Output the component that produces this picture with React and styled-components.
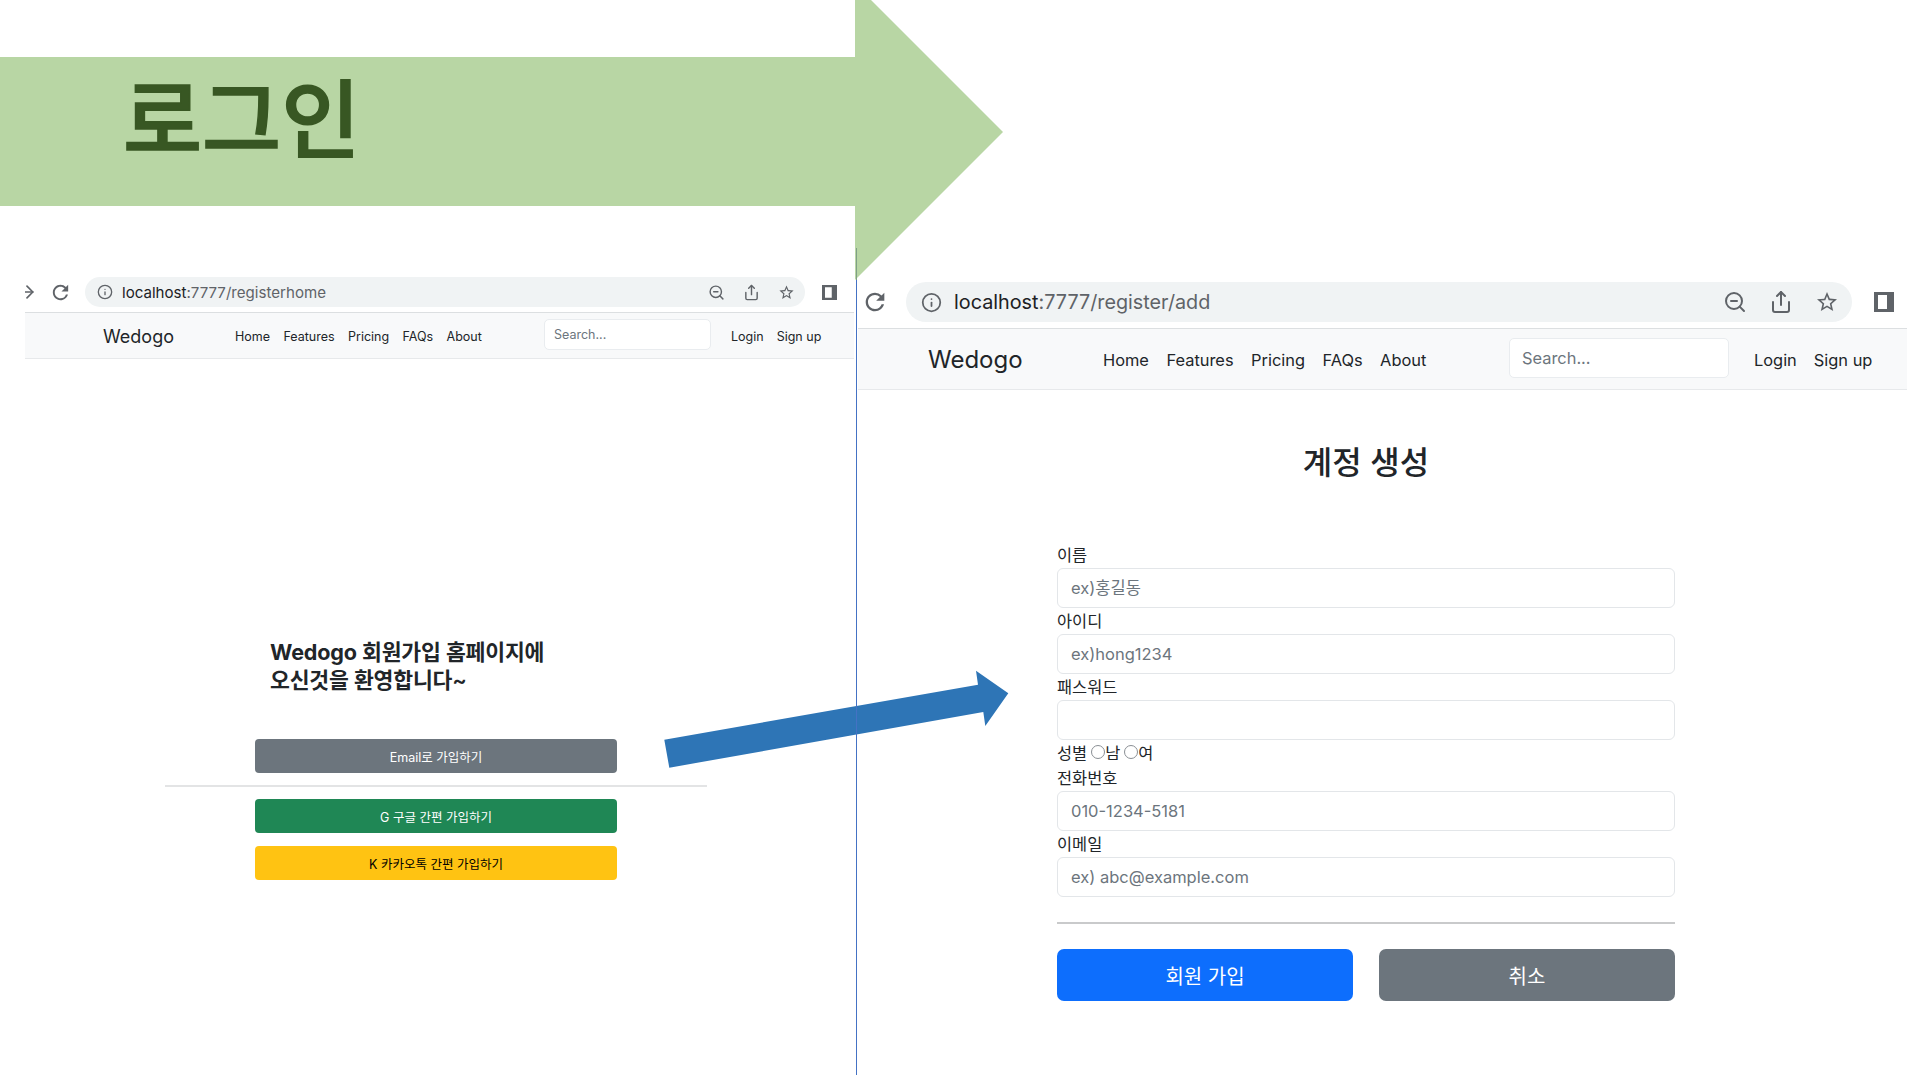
import styled, { createGlobalStyle } from "styled-components";
import { Info, ZoomOut, Share, ArrowRight } from "lucide-react";

const FONT = `Inter, "Noto Sans CJK KR", sans-serif`;

const GlobalStyle = createGlobalStyle`
  html, body {
    margin: 0;
    padding: 0;
    background: #fff;
    overflow: hidden;
  }
  * {
    box-sizing: border-box;
  }
`;

const NAV_LINKS = ["Home", "Features", "Pricing", "FAQs", "About"];

const FIELDS_TOP = [
  { label: "이름", placeholder: "ex)홍길동" },
  { label: "아이디", placeholder: "ex)hong1234" },
  { label: "패스워드", placeholder: "" },
];

const FIELDS_BOTTOM = [
  { label: "전화번호", placeholder: "010-1234-5181" },
  { label: "이메일", placeholder: "ex) abc@example.com" },
];

// chrome's own toolbar glyphs, lucide has no filled-head reload or thick star
const ReloadIcon = ({ size }) => (
  <svg width={size} height={size} viewBox="0 0 24 24">
    <path
      fill="#5f6368"
      d="M17.65 6.35A7.958 7.958 0 0 0 12 4c-4.42 0-7.99 3.58-7.99 8s3.57 8 7.99 8c3.73 0 6.84-2.55 7.73-6h-2.08A5.99 5.99 0 0 1 12 18c-3.31 0-6-2.69-6-6s2.69-6 6-6c1.66 0 3.14.69 4.22 1.78L13 11h7V4l-2.35 2.35z"
    />
  </svg>
);

const StarIcon = ({ size }) => (
  <svg width={size} height={size} viewBox="0 0 24 24">
    <path
      fill="#5f6368"
      d="M22 9.24l-7.19-.62L12 2 9.19 8.63 2 9.24l5.46 4.73L5.82 21 12 17.27 18.18 21l-1.63-7.03L22 9.24zM12 15.4l-3.76 2.27 1-4.28-3.32-2.88 4.38-.38L12 6.1l1.71 4.04 4.38.38-3.32 2.88 1 4.28L12 15.4z"
    />
  </svg>
);

const PanelIcon = ({ size }) => (
  <svg width={size} height={size} viewBox="0 0 20 20">
    <path fill="#5f6368" fillRule="evenodd" d="M0 0h20v20H0zM4 3v14h9V3z" />
  </svg>
);

const Toolbar = ({ big, url, path }) => {
  const s = big ? 24 : 17;
  return (
    <Bar $big={big}>
      {!big && (
        <Clip>
          <ArrowRight size={20} color="#5f6368" strokeWidth={2} />
        </Clip>
      )}
      <Reload $big={big}>
        <ReloadIcon size={big ? 28 : 23} />
      </Reload>
      <Pill $big={big}>
        <Info size={big ? 21 : 16} color="#5f6368" strokeWidth={2} />
        <Url $big={big}>
          {url}
          <UrlRest>{path}</UrlRest>
        </Url>
        <PillIcons $big={big}>
          <ZoomOut size={s} color="#5f6368" strokeWidth={2} />
          <Share size={s} color="#5f6368" strokeWidth={2} />
          <StarIcon size={s} />
        </PillIcons>
      </Pill>
      <PanelSlot $big={big}>
        <PanelIcon size={big ? 20 : 15} />
      </PanelSlot>
    </Bar>
  );
};

const Navbar = ({ big }) => (
  <Nav $big={big}>
    <Brand $big={big}>Wedogo</Brand>
    <NavLinks $big={big}>
      {NAV_LINKS.map((l) => (
        <span key={l}>{l}</span>
      ))}
    </NavLinks>
    <Search $big={big} placeholder="Search..." readOnly />
    <NavAuth $big={big}>
      <span>Login</span>
      <span>Sign up</span>
    </NavAuth>
  </Nav>
);

const Field = ({ label, placeholder }) => (
  <FieldWrap>
    <FieldLabel>{label}</FieldLabel>
    <FieldInput placeholder={placeholder} readOnly />
  </FieldWrap>
);

const App = () => (
  <>
    <GlobalStyle />
    <Slide>
      <LeftPane>
        <Toolbar url="localhost" path=":7777/registerhome" />
        <Navbar />
        <Welcome>
          <strong>Wedogo</strong> 회원가입 홈페이지에
          <br />
          오신것을 환영합니다~
        </Welcome>
        <SmallButton $bg="#6c757d">Email로 가입하기</SmallButton>
        <Divider />
        <SmallButton $bg="#1f8755">G 구글 간편 가입하기</SmallButton>
        <SmallButton $bg="#ffc312" $dark $gap>
          K 카카오톡 간편 가입하기
        </SmallButton>
      </LeftPane>

      <RightPane>
        <Toolbar big url="localhost" path=":7777/register/add" />
        <Navbar big />
        <Title>계정 생성</Title>
        <Form>
          {FIELDS_TOP.map((f) => (
            <Field key={f.label} {...f} />
          ))}
          <GenderRow>
            성별
            <Radio type="radio" name="gender" />남
            <Radio type="radio" name="gender" />여
          </GenderRow>
          {FIELDS_BOTTOM.map((f) => (
            <Field key={f.label} {...f} />
          ))}
          <FormRule />
          <Actions>
            <BigButton $bg="#0d6efd">회원 가입</BigButton>
            <BigButton $bg="#6c757d">취소</BigButton>
          </Actions>
        </Form>
      </RightPane>

      <GreenArrow viewBox="0 0 1003 280" width="1003" height="280">
        <polygon
          fill="#b8d6a4"
          points="0,57 855,57 855,-16 1003,132 855,280 855,206 0,206"
        />
      </GreenArrow>
      <BannerTitle>로그인</BannerTitle>

      <BlueArrow viewBox="0 0 1918 1075" width="1918" height="1075">
        <polygon
          fill="#2e75b6"
          points="664.3,739.7 978,684.7 976,670.7 1008.3,693.3 985.3,726 983.3,712 669.3,767.7"
        />
      </BlueArrow>
      <SplitLine />
    </Slide>
  </>
);

const Slide = styled.div`
  position: relative;
  width: 1918px;
  height: 1075px;
  overflow: hidden;
  display: grid;
  grid-template-columns: 857px 1fr;
  font-family: ${FONT};
  color: #212529;
`;

const LeftPane = styled.section`
  padding: 277px 3px 0 25px;
  display: flex;
  flex-direction: column;
`;

const RightPane = styled.section`
  padding-top: 282px;
  display: flex;
  flex-direction: column;
  margin: 0 11px 0 1px;
`;

const Bar = styled.div`
  position: relative;
  display: flex;
  align-items: flex-start;
  height: ${(p) => (p.$big ? "47px" : "36px")};
  border-bottom: 1px solid #dcdfe1;
`;

const Clip = styled.div`
  width: 9px;
  height: 30px;
  overflow: hidden;
  display: flex;
  align-items: center;
  justify-content: flex-end;
  svg {
    flex: none;
    margin-right: -3px;
  }
`;

const Reload = styled.div`
  width: ${(p) => (p.$big ? "48px" : "51px")};
  height: ${(p) => (p.$big ? "40px" : "30px")};
  display: flex;
  align-items: center;
  padding-left: ${(p) => (p.$big ? "3px" : "15px")};
`;

const Pill = styled.div`
  display: flex;
  align-items: center;
  width: ${(p) => (p.$big ? "946px" : "720px")};
  height: ${(p) => (p.$big ? "40px" : "30px")};
  padding-left: ${(p) => (p.$big ? "15px" : "12px")};
  border-radius: 20px;
  background: #f0f3f4;
`;

const Url = styled.span`
  margin-left: ${(p) => (p.$big ? "12px" : "9px")};
  font-size: ${(p) => (p.$big ? "19.8px" : "15.1px")};
  color: #202124;
  white-space: nowrap;
`;

const UrlRest = styled.span`
  color: #5f6368;
`;

const PillIcons = styled.div`
  margin-left: auto;
  margin-right: ${(p) => (p.$big ? "13px" : "10px")};
  display: flex;
  align-items: center;
  gap: ${(p) => (p.$big ? "22px" : "18px")};
`;

const PanelSlot = styled.div`
  margin-left: ${(p) => (p.$big ? "22px" : "17px")};
  height: ${(p) => (p.$big ? "40px" : "30px")};
  display: flex;
  align-items: center;
`;

const Nav = styled.nav`
  display: flex;
  align-items: center;
  height: ${(p) => (p.$big ? "61px" : "46px")};
  padding-left: ${(p) => (p.$big ? "70px" : "78px")};
  padding-top: 1px;
  background: #f8f9fa;
  border-bottom: 1px solid #e7e9eb;
`;

const Brand = styled.span`
  width: ${(p) => (p.$big ? "175px" : "132px")};
  font-size: ${(p) => (p.$big ? "24px" : "18px")};
`;

const NavLinks = styled.div`
  display: flex;
  gap: ${(p) => (p.$big ? "17.5px" : "13.4px")};
  width: ${(p) => (p.$big ? "406px" : "309px")};
  font-size: ${(p) => (p.$big ? "16.4px" : "12.5px")};
`;

const Search = styled.input`
  width: ${(p) => (p.$big ? "220px" : "167px")};
  height: ${(p) => (p.$big ? "40px" : "31px")};
  margin-top: -3px;
  padding: ${(p) => (p.$big ? "0 12px" : "0 9px")};
  border: 1px solid #e9ecef;
  border-radius: 5px;
  background: #fff;
  font-family: ${FONT};
  font-size: ${(p) => (p.$big ? "16.4px" : "12.5px")};
  &::placeholder {
    color: #6c757d;
  }
`;

const NavAuth = styled.div`
  display: flex;
  margin-left: ${(p) => (p.$big ? "25px" : "20px")};
  gap: ${(p) => (p.$big ? "17px" : "13px")};
  font-size: ${(p) => (p.$big ? "16.4px" : "12.5px")};
`;

const Welcome = styled.h3`
  margin: 279px 0 45px 245px;
  font-size: 21.6px;
  line-height: 28px;
  font-weight: 600;
  letter-spacing: -0.2px;
  strong {
    font-weight: 700;
  }
`;

const SmallButton = styled.button`
  width: 362px;
  height: 34px;
  margin: ${(p) => (p.$gap ? "13px" : "0")} 0 0 230px;
  border: 0;
  border-radius: 4px;
  background: ${(p) => p.$bg};
  color: ${(p) => (p.$dark ? "#000" : "#fff")};
  font-family: ${FONT};
  font-size: 12.5px;
`;

const Divider = styled.hr`
  width: 542px;
  height: 2px;
  margin: 12px 0 12px 140px;
  border: 0;
  background: #e3e4e5;
`;

const Title = styled.h2`
  margin: 54px 0 0 199px;
  width: 618px;
  text-align: center;
  font-size: 32px;
  line-height: 38px;
  font-weight: 500;
`;

const Form = styled.form`
  width: 618px;
  margin: 61px 0 0 199px;
`;

const FieldWrap = styled.div`
  margin-bottom: 1px;
`;

const FieldLabel = styled.label`
  display: block;
  height: 25px;
  font-size: 16.4px;
  line-height: 24px;
`;

const FieldInput = styled.input`
  display: block;
  width: 100%;
  height: 40px;
  padding: 0 13px;
  border: 1px solid #e3e6e9;
  border-radius: 6px;
  font-family: ${FONT};
  font-size: 16.5px;
  &::placeholder {
    color: #6c757d;
  }
`;

const GenderRow = styled.div`
  display: flex;
  align-items: center;
  height: 25px;
  padding-bottom: 3px;
  font-size: 16.4px;
`;

const Radio = styled.input`
  appearance: none;
  width: 14px;
  height: 14px;
  margin: 0 0 0 4px;
  border: 1px solid #8a8f94;
  border-radius: 50%;
`;

const FormRule = styled.hr`
  height: 2px;
  margin: 25px 0;
  border: 0;
  background: #c9cacb;
`;

const Actions = styled.div`
  display: grid;
  grid-template-columns: 296px 296px;
  justify-content: space-between;
`;

const BigButton = styled.button`
  height: 52px;
  border: 0;
  border-radius: 7px;
  background: ${(p) => p.$bg};
  color: #fff;
  font-family: ${FONT};
  font-size: 20px;
`;

const GreenArrow = styled.svg`
  position: absolute;
  top: 0;
  left: 0;
`;

const BannerTitle = styled.div`
  position: absolute;
  top: 63px;
  left: 123px;
  font-size: 86px;
  line-height: 116px;
  font-weight: 500;
  -webkit-text-stroke: 1.5px #385723;
  color: #385723;
`;

const BlueArrow = styled.svg`
  position: absolute;
  top: 0;
  left: 0;
`;

const SplitLine = styled.div`
  position: absolute;
  top: 248px;
  bottom: 0;
  left: 856px;
  width: 1px;
  background: linear-gradient(#7f9f86 32px, #4472c4 32px);
`;

export default App;
